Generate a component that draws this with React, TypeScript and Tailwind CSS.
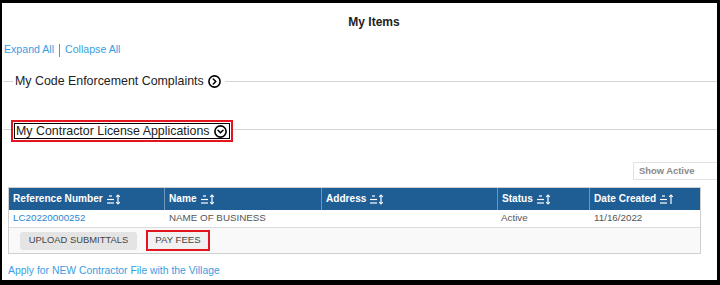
import React from 'react';

const font = { fontFamily: '"Liberation Sans", Arial, sans-serif' };

function SortIcon({ dir = 'both' }: { dir?: 'both' | 'up' }) {
  return (
    <svg width="14" height="11" viewBox="0 0 14 11" className="ml-[4px] shrink-0" fill="none" stroke="white" strokeWidth="1.2">
      <line x1="2" y1="2" x2="5" y2="2" />
      <line x1="0" y1="5.5" x2="7" y2="5.5" />
      <line x1="0" y1="9" x2="7" y2="9" />
      <line x1="11" y1="1" x2="11" y2="10" />
      <polyline points="9.2,2.8 11,1 12.8,2.8" />
      {dir === 'both' && <polyline points="9.2,8.2 11,10 12.8,8.2" />}
    </svg>
  );
}

function CircleChevron({ down = false }: { down?: boolean }) {
  return (
    <svg width="13" height="13" viewBox="0 0 13 13" fill="none" stroke="black" strokeWidth="1.6" className="shrink-0">
      <circle cx="6.5" cy="6.5" r="5.6" />
      {down ? (
        <polyline points="4,5.3 6.5,7.8 9,5.3" strokeLinecap="round" strokeLinejoin="round" />
      ) : (
        <polyline points="5.3,4 7.8,6.5 5.3,9" strokeLinecap="round" strokeLinejoin="round" />
      )}
    </svg>
  );
}

const columns = [
  { label: 'Reference Number', width: 'w-[155px]', dir: 'both' as const },
  { label: 'Name', width: 'w-[157px]', dir: 'both' as const },
  { label: 'Address', width: 'w-[176px]', dir: 'both' as const },
  { label: 'Status', width: 'w-[92px]', dir: 'both' as const },
  { label: 'Date Created', width: 'flex-1', dir: 'up' as const },
];

export default function App() {
  return (
    <div
      className="w-[720px] h-[285px] overflow-hidden bg-white border-black border-t-[3px] border-l-2 border-r-[3px] border-b-[5px] flex flex-col"
      style={font}
    >
      {/* title */}
      <div className="h-[37px] shrink-0 flex items-center justify-center pl-[29px]">
        <h1 className="text-[12px] font-bold text-[#222]">My Items</h1>
      </div>

      {/* expand / collapse */}
      <div className="h-[20px] shrink-0 flex items-center pl-[2px] text-[10.6px] text-[#3a9de4]">
        <span>Expand All</span>
        <span className="mx-[5px] w-px h-[13px] bg-[#888]" />
        <span>Collapse All</span>
      </div>

      {/* code enforcement */}
      <div className="h-[42px] shrink-0 flex items-center pl-[1px]">
        <div className="w-[10px] h-px bg-[#d4d4d4]" />
        <span className="ml-[2px] text-[12.4px] text-[#222]">My Code Enforcement Complaints</span>
        <span className="ml-[4px]"><CircleChevron /></span>
        <div className="flex-1 h-px bg-[#d4d4d4] ml-[4px]" />
      </div>

      {/* contractor license */}
      <div className="h-[38px] shrink-0 flex items-center mt-[10px] pl-[1px]">
        <div className="w-[8px] h-px bg-[#d4d4d4] mb-[4px]" />
        <div className="border-2 border-[#e3151e] p-[1px]">
          <div className="border border-black flex items-center h-[16px] pl-[1px] pr-[2px]">
            <span className="text-[12.4px] text-[#222] leading-none">My Contractor License Applications</span>
            <span className="ml-[4px]"><CircleChevron down /></span>
          </div>
        </div>
        <div className="flex-1 h-px bg-[#d4d4d4] mb-[4px]" />
      </div>

      {/* show active */}
      <div className="h-[37px] shrink-0 flex items-start pt-[12px]">
        <div className="ml-[631px] w-[100px] h-[18px] shrink-0 border border-[#e2e2e2] flex items-center pl-[5px] text-[9.4px] font-bold text-[#888]">
          Show Active
        </div>
      </div>

      {/* table */}
      <div className="ml-[6px] w-[693px] shrink-0 border border-[#cfcfcf]">
        <div className="flex h-[22px] bg-[#1f5d95]">
          {columns.map((c, i) => (
            <div
              key={c.label}
              className={`${c.width} flex items-center pl-[4px] text-[10.1px] font-bold text-white ${i > 0 ? 'border-l border-[#6f95ba]' : ''}`}
            >
              {c.label}
              <SortIcon dir={c.dir} />
            </div>
          ))}
        </div>
        <div className="flex h-[18px] items-center bg-white border-b border-[#dcdcdc] text-[9.8px] text-[#555]">
          <div className="w-[155px] pl-[4px] text-[#2b86d3]">LC20220000252</div>
          <div className="w-[157px] pl-[5px]">NAME OF BUSINESS</div>
          <div className="w-[176px]" />
          <div className="w-[92px] pl-[4px]">Active</div>
          <div className="flex-1 pl-[5px]">11/16/2022</div>
        </div>
        <div className="flex h-[25px] items-center bg-[#f9f9f9] pl-[11px]">
          <button className="h-[18px] w-[117px] rounded-[3px] bg-[#e4e4e4] text-[9.4px] text-[#444] flex items-center justify-center">
            UPLOAD SUBMITTALS
          </button>
          <div className="ml-[9px] border-2 border-[#e3151e] h-[21px] w-[64px] bg-[#f1f1f1] flex items-center justify-center text-[9.6px] text-[#444]">
            PAY FEES
          </div>
        </div>
      </div>

      {/* apply link */}
      <div className="mt-[7px] h-[20px] flex items-center pl-[6px] text-[10.4px] text-[#3a9de4]">
        Apply for NEW Contractor File with the Village
      </div>
    </div>
  );
}
